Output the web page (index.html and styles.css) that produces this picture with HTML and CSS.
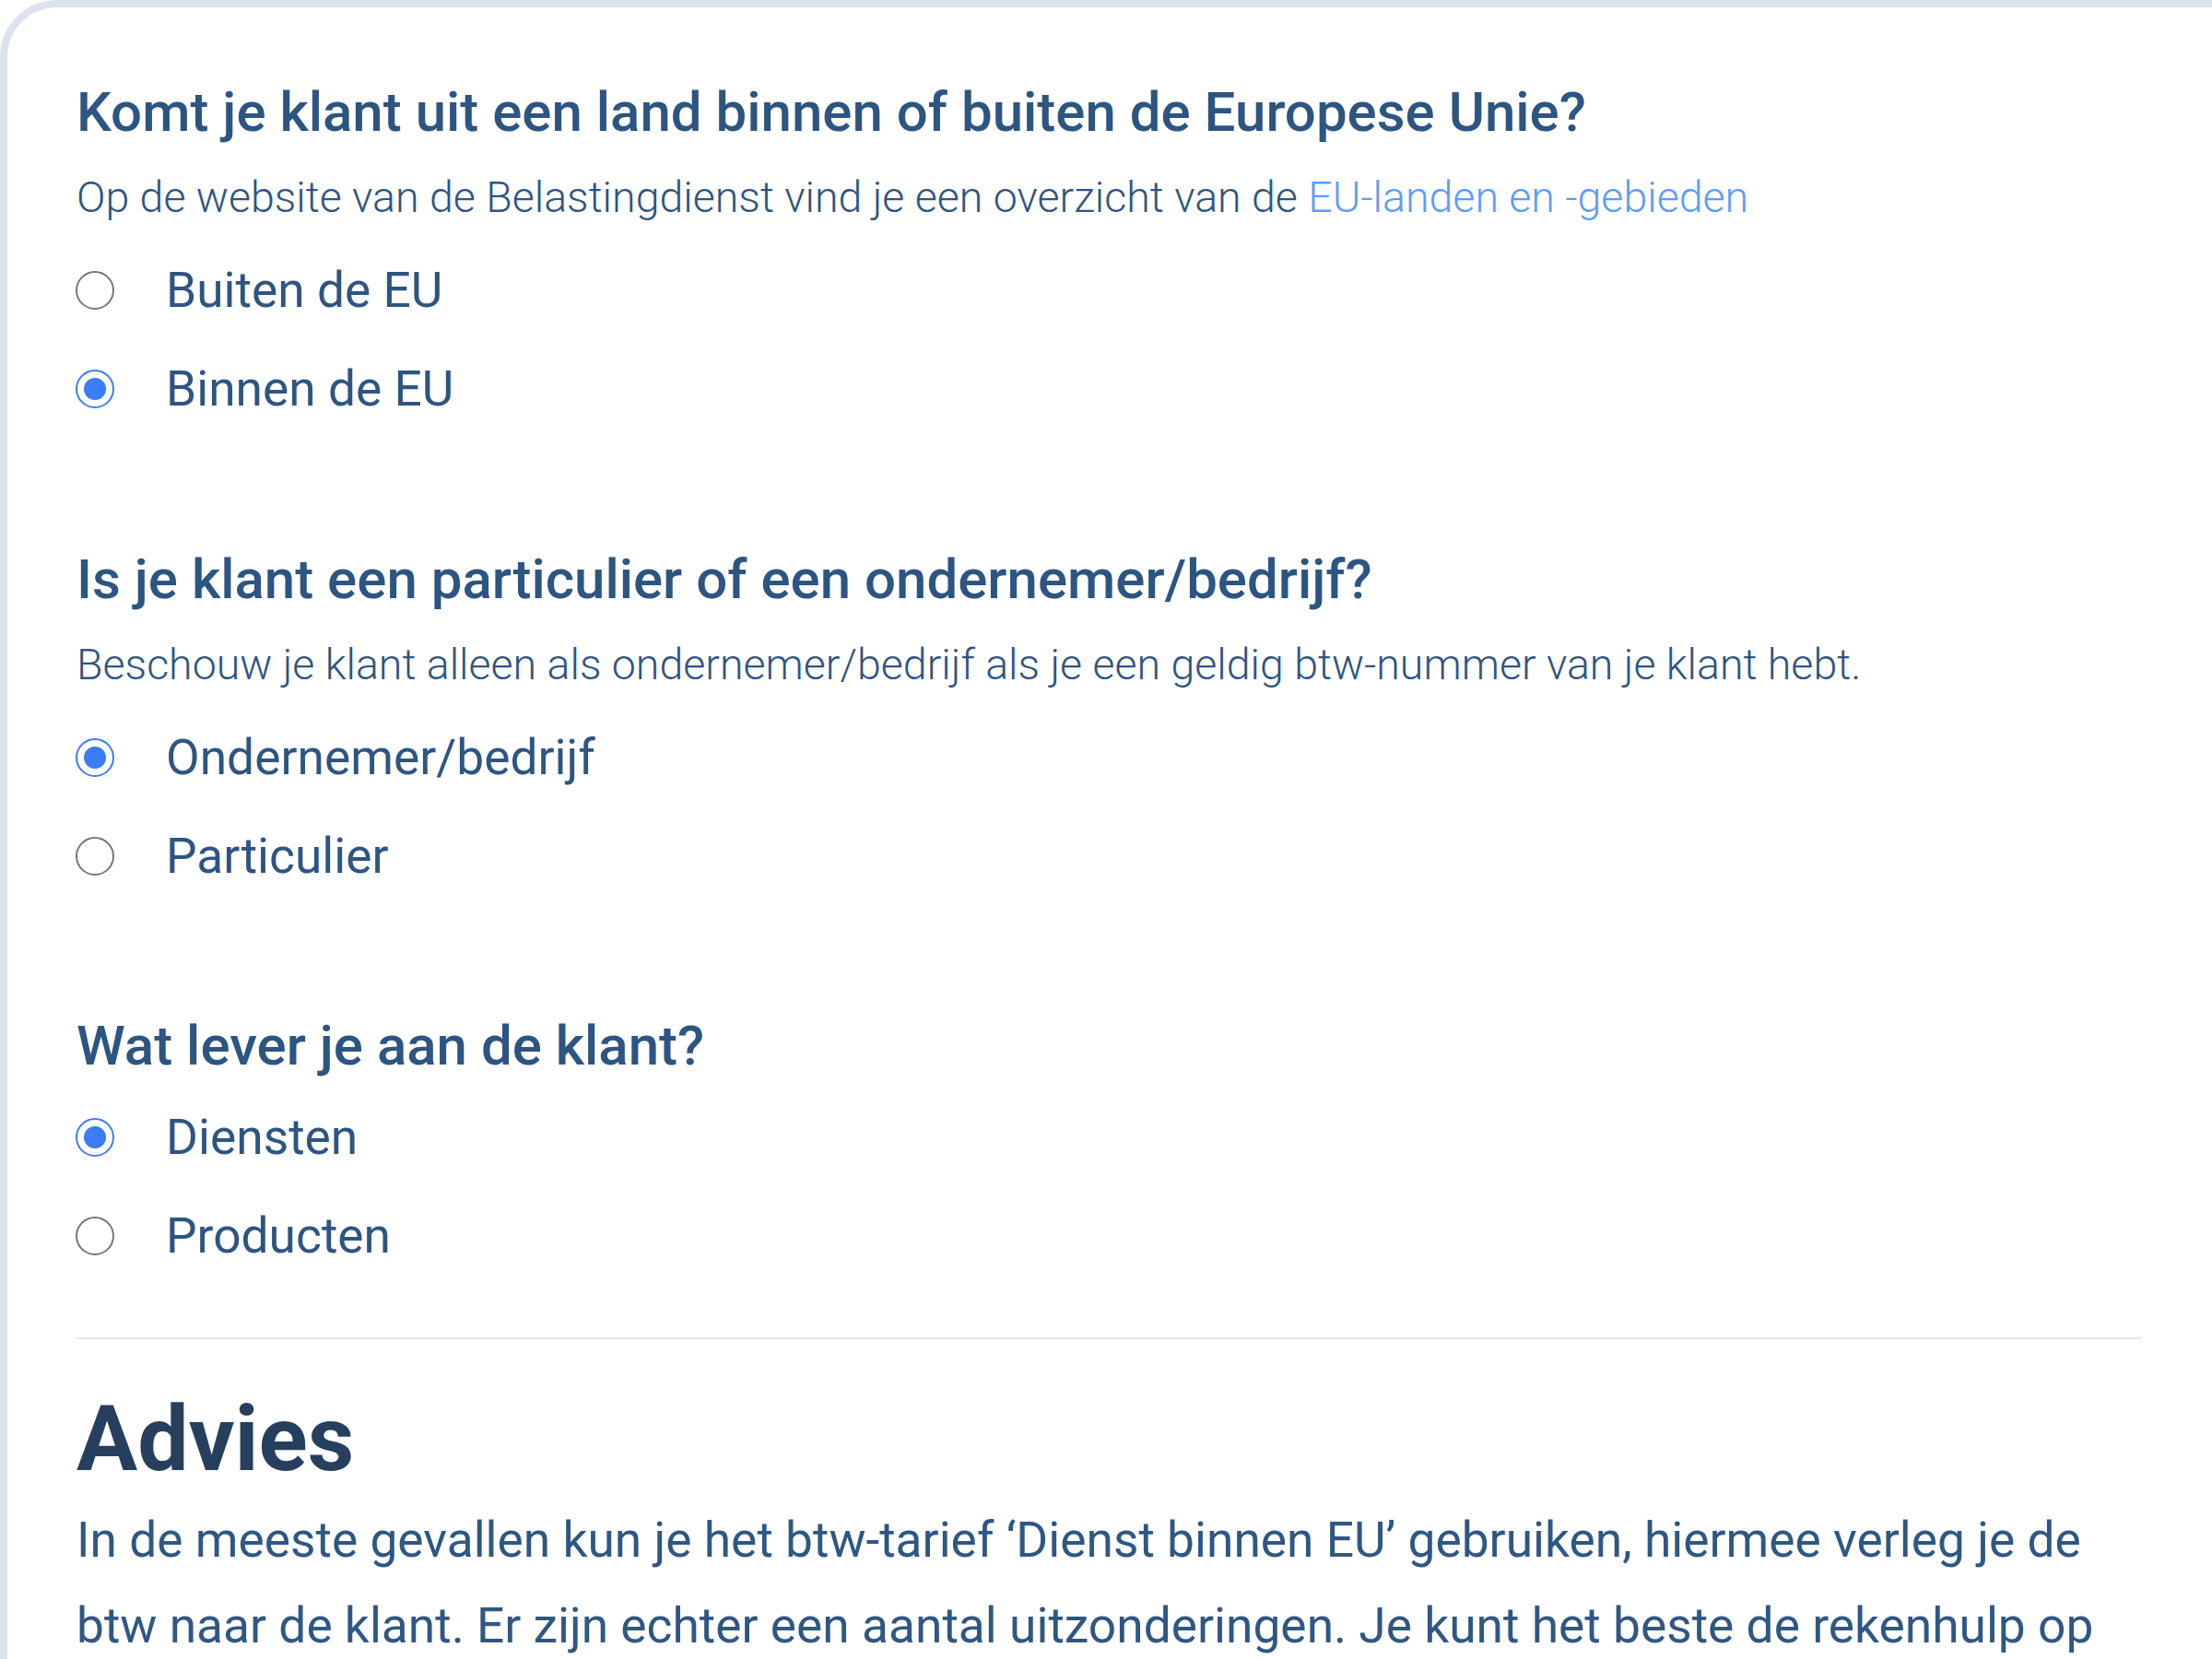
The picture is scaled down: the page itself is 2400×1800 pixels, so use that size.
FILE: index.html
```html
<!DOCTYPE html>
<html lang="nl">
<head>
<meta charset="utf-8">
<title>Btw-tarief hulp</title>
<link rel="stylesheet" href="styles.css">
</head>
<body>
<div class="card">
  <section class="question">
    <h2 class="q-title">Komt je klant uit een land binnen of buiten de Europese Unie?</h2>
    <p class="q-hint">Op de website van de Belastingdienst vind je een overzicht van de <a class="link" href="#">EU-landen en -gebieden</a></p>
    <div class="options">
      <label class="option"><input type="radio" name="eu"><span>Buiten de EU</span></label>
      <label class="option"><input type="radio" name="eu" checked><span>Binnen de EU</span></label>
    </div>
  </section>
  <section class="question">
    <h2 class="q-title">Is je klant een particulier of een ondernemer/bedrijf?</h2>
    <p class="q-hint">Beschouw je klant alleen als ondernemer/bedrijf als je een geldig btw-nummer van je klant hebt.</p>
    <div class="options">
      <label class="option"><input type="radio" name="type" checked><span>Ondernemer/bedrijf</span></label>
      <label class="option"><input type="radio" name="type"><span>Particulier</span></label>
    </div>
  </section>
  <section class="question question-last">
    <h2 class="q-title">Wat lever je aan de klant?</h2>
    <div class="options options-tight">
      <label class="option"><input type="radio" name="lever" checked><span>Diensten</span></label>
      <label class="option"><input type="radio" name="lever"><span>Producten</span></label>
    </div>
  </section>
  <hr class="divider">
  <section class="advice">
    <h1 class="advice-title">Advies</h1>
    <p class="advice-text">In de meeste gevallen kun je het btw-tarief ‘Dienst binnen EU’ gebruiken, hiermee verleg je de btw naar de klant. Er zijn echter een aantal uitzonderingen. Je kunt het beste de rekenhulp op de website van de Belastingdienst gebruiken om te controleren welk tarief voor jouw situatie geldt.</p>
  </section>
</div>
</body>
</html>
```
FILE: styles.css
```css
html, body {
  margin: 0;
  padding: 0;
  background: #ffffff;
  overflow: hidden;
}

body {
  width: 2400px;
  height: 1800px;
  font-family: Roboto, "Liberation Sans", Arial, sans-serif;
  color: #2e5582;
}

.card {
  box-sizing: border-box;
  width: 2480px;
  height: 1900px;
  border: 8px solid #dde3ee;
  border-radius: 62px;
  background: #ffffff;
  padding: 77px 149px 0 75px;
}

.question {
  margin-bottom: 116px;
}

.question-last {
  margin-bottom: 0;
}

.q-title {
  margin: 0;
  font-size: 60px;
  line-height: 74px;
  font-weight: 500;
  color: #2d5582;
}

.q-hint {
  margin: 28px 0 0 0;
  font-size: 46.5px;
  line-height: 54px;
  font-weight: 300;
  color: #2e5582;
}

.link {
  color: #5c9df6;
  text-decoration: none;
}

.options {
  margin-top: 20.5px;
  display: flex;
  flex-direction: column;
}

.options-tight {
  margin-top: 8px;
}

.option {
  height: 107px;
  display: flex;
  align-items: center;
  font-size: 53.3px;
  line-height: 64px;
  font-weight: 400;
  color: #2e5582;
  cursor: pointer;
}

.option input {
  appearance: none;
  -webkit-appearance: none;
  box-sizing: border-box;
  width: 42px;
  height: 42px;
  margin: 0 56px 0 -1px;
  border: 2.5px solid #767676;
  border-radius: 50%;
  background: #ffffff;
  flex: none;
}

.option input:checked {
  border: 2.5px solid #3b7df6;
  background: radial-gradient(circle, #3b7df6 0 11.5px, #ffffff 12.5px);
}

.divider {
  margin: 57px 0 0 0;
  border: 0;
  height: 2px;
  background: #e5e6ee;
}

.advice-title {
  margin: 49px 0 0 0;
  font-size: 98.5px;
  line-height: 120px;
  font-weight: 700;
  color: #263f5e;
}

.advice-text {
  margin: 3px 0 0 0;
  font-size: 53.3px;
  line-height: 93px;
  font-weight: 400;
  color: #2f5784;
}
```
